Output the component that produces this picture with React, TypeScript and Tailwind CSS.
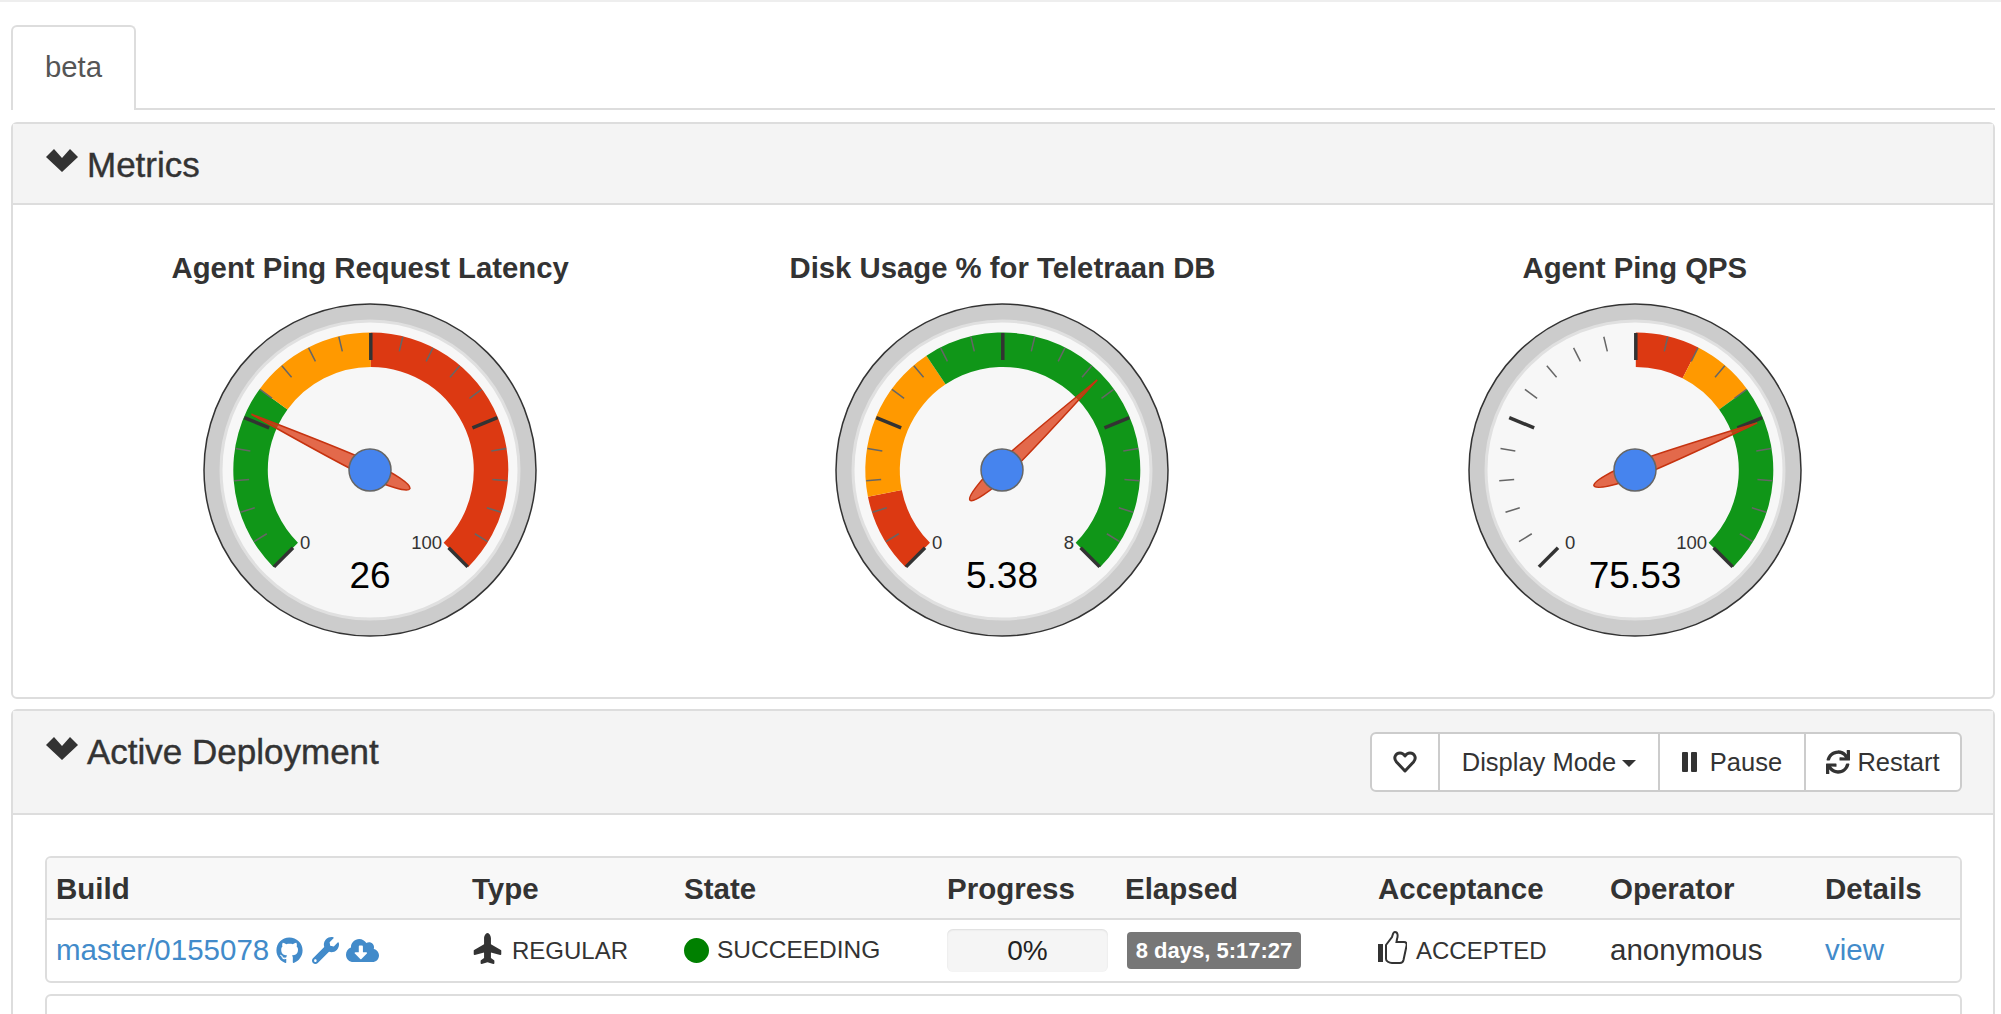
import { FaSync, FaGithub, FaWrench, FaCloudDownloadAlt, FaPlane } from 'react-icons/fa';

const GREEN = '#109618';
const ORANGE = '#ff9900';
const RED = '#dc3912';

interface Band {
  from: number;
  to: number;
  color: string;
}

interface GaugeProps {
  title: string;
  max: number;
  value: number;
  label: string;
  bands: Band[];
}

const toAngle = (v: number, max: number) => -135 + (v / max) * 270;

const polar = (r: number, deg: number) => {
  const a = (deg * Math.PI) / 180;
  return [r * Math.sin(a), -r * Math.cos(a)];
};

function bandPath(r1: number, r2: number, a1: number, a2: number) {
  const [x1, y1] = polar(r2, a1);
  const [x2, y2] = polar(r2, a2);
  const [x3, y3] = polar(r1, a2);
  const [x4, y4] = polar(r1, a1);
  const large = a2 - a1 > 180 ? 1 : 0;
  return `M${x1} ${y1}A${r2} ${r2} 0 ${large} 1 ${x2} ${y2}L${x3} ${y3}A${r1} ${r1} 0 ${large} 0 ${x4} ${y4}Z`;
}

function Gauge({ title, max, value, label, bands }: GaugeProps) {
  const ticks = Array.from({ length: 21 }, (_, i) => i);
  const needle = toAngle(value, max);

  return (
    <div className="flex flex-col items-center">
      <div className="text-[29.3px] font-bold leading-[34px] text-[#333]">{title}</div>
      <svg viewBox="-170 -170 340 340" className="mt-[15px] h-[340px] w-[340px]">
        <circle r="166" fill="#ccc" stroke="#333" strokeWidth="1.5" />
        <circle r="149" fill="#f7f7f7" stroke="#e0e0e0" strokeWidth="3" />
        <g transform="translate(0.8 0)">
          {bands.map((b) => (
            <path key={b.from} d={bandPath(103, 137.5, toAngle(b.from, max), toAngle(b.to, max))} fill={b.color} />
          ))}
          {ticks.map((i) => {
            const deg = -135 + i * 13.5;
            const major = i % 5 === 0;
            const [x1, y1] = polar(137, deg);
            const [x2, y2] = polar(major ? 110 : 122, deg);
            return (
              <line
                key={i}
                x1={x1}
                y1={y1}
                x2={x2}
                y2={y2}
                stroke={major ? '#333' : '#666'}
                strokeWidth={major ? 3.5 : 1.5}
              />
            );
          })}
        </g>
        <text x="-70" y="79" fontSize="18.5" fill="#333">0</text>
        <text x="72" y="79" fontSize="18.5" fill="#333" textAnchor="end">{max}</text>
        <text x="0" y="118" fontSize="37" fill="#000" textAnchor="middle">{label}</text>
        <path
          transform={`rotate(${needle})`}
          d="M0 -131C3 -90 7.5 -30 7.5 0C7.5 22 4.5 44 0 44C-4.5 44 -7.5 22 -7.5 0C-7.5 -30 -3 -90 0 -131Z"
          fill={RED}
          fillOpacity="0.75"
          stroke="#c63310"
          strokeWidth="1.5"
        />
        <circle r="21" fill="#4684ee" stroke="#666" strokeWidth="1.5" />
      </svg>
    </div>
  );
}

function PanelTitle({ children }: { children: string }) {
  return (
    <div className="flex items-center gap-[9px] text-[35px] leading-[40px] text-[#333] [-webkit-text-stroke:0.4px_#333]">
      <svg viewBox="0 0 32 23" className="mt-[-8px] h-[23px] w-[32px]" fill="#333">
        <path d="M0 8L8 0L16 9L24 0L32 8L16 23Z" />
      </svg>
      <span>{children}</span>
    </div>
  );
}

const headers = ['Build', 'Type', 'State', 'Progress', 'Elapsed', 'Acceptance', 'Operator', 'Details'];

export default function App() {
  return (
    <div className="h-[1014px] overflow-hidden bg-white font-['Liberation_Sans',Arial,sans-serif] text-[#333]">
      <div className="h-[2px] bg-[#eee]" />

      {/* Tabs */}
      <div className="ml-[11px] mr-[6px] mt-[23px] flex h-[85px] border-b-2 border-[#ddd]">
        <div className="mb-[-2px] flex w-[125px] items-center justify-center rounded-t-[6px] border-2 border-b-0 border-[#ddd] bg-white pb-[4px] text-[29.3px] text-[#555]">
          beta
        </div>
      </div>

      {/* Metrics */}
      <div className="ml-[11px] mr-[6px] mt-[12px] rounded-[6px] border-2 border-[#ddd]">
        <div className="flex h-[81px] items-center border-b-2 border-[#ddd] bg-[#f4f4f4] pl-[33px] pt-[2px]">
          <PanelTitle>Metrics</PanelTitle>
        </div>
        <div className="grid grid-cols-3 pb-[57px] pl-[41px] pr-[42px] pt-[46px]">
          <Gauge
            title="Agent Ping Request Latency"
            max={100}
            value={26}
            label="26"
            bands={[
              { from: 0, to: 30, color: GREEN },
              { from: 30, to: 50, color: ORANGE },
              { from: 50, to: 100, color: RED },
            ]}
          />
          <Gauge
            title="Disk Usage % for Teletraan DB"
            max={8}
            value={5.38}
            label="5.38"
            bands={[
              { from: 0, to: 1, color: RED },
              { from: 1, to: 3, color: ORANGE },
              { from: 3, to: 8, color: GREEN },
            ]}
          />
          <Gauge
            title="Agent Ping QPS"
            max={100}
            value={75.53}
            label="75.53"
            bands={[
              { from: 50, to: 60, color: RED },
              { from: 60, to: 70, color: ORANGE },
              { from: 70, to: 100, color: GREEN },
            ]}
          />
        </div>
      </div>

      {/* Active Deployment */}
      <div className="ml-[11px] mr-[6px] mt-[10px] rounded-[6px] border-2 border-[#ddd]">
        <div className="flex h-[104px] items-start justify-between border-b-2 border-[#ddd] bg-[#f4f4f4] pl-[33px] pr-[31px]">
          <div className="pt-[21px]">
            <PanelTitle>Active Deployment</PanelTitle>
          </div>
          <div className="mt-[21px] flex h-[60px] rounded-[6px] border-2 border-[#ccc] bg-white text-[25.5px] text-[#333]">
            <div className="flex w-[68px] items-center justify-center border-r-2 border-[#ccc]">
              <svg viewBox="0 0 24 24" className="h-[24px] w-[24px]" fill="none" stroke="#333" strokeWidth="3" strokeLinejoin="round">
                <path d="M12 21L3.5 12C0 8 2.5 3 7 3C9.5 3 11 4.5 12 6C13 4.5 14.5 3 17 3C21.5 3 24 8 20.5 12Z" />
              </svg>
            </div>
            <div className="flex w-[220px] items-center justify-center gap-[6px] border-r-2 border-[#ccc]">
              Display Mode
              <span className="mt-[3px] border-x-[7px] border-t-[7px] border-x-transparent border-t-[#333]" />
            </div>
            <div className="flex w-[146px] items-center justify-center gap-[13px] border-r-2 border-[#ccc]">
              <svg viewBox="0 0 15 20" className="h-[20px] w-[15px]" fill="#333">
                <rect x="0" y="0" width="6" height="20" rx="1" />
                <rect x="9" y="0" width="6" height="20" rx="1" />
              </svg>
              Pause
            </div>
            <div className="flex w-[154px] items-center justify-center gap-[7px]">
              <FaSync size={24} />
              Restart
            </div>
          </div>
        </div>

        <div className="pl-[32px] pr-[31px] pt-[41px]">
          <div className="overflow-hidden rounded-[6px] border-2 border-[#ddd]">
            <table className="w-full table-fixed border-collapse">
              <colgroup>
                <col className="w-[415px]" />
                <col className="w-[212px]" />
                <col className="w-[263px]" />
                <col className="w-[178px]" />
                <col className="w-[253px]" />
                <col className="w-[232px]" />
                <col className="w-[215px]" />
                <col />
              </colgroup>
              <thead>
                <tr className="h-[61px] border-b-2 border-[#ddd] bg-[#f8f8f8]">
                  {headers.map((h, i) => (
                    <th key={h} className={`${i === 0 ? 'pl-[9px]' : 'pl-[10px]'} pt-[2px] text-left text-[29.5px] font-bold`}>
                      {h}
                    </th>
                  ))}
                </tr>
              </thead>
              <tbody>
                <tr className="h-[62px]">
                  <td className="pl-[9px]">
                    <div className="flex items-center gap-[7px] text-[29.5px] text-[#428bca]">
                      master/0155078
                      <FaGithub size={27} />
                      <FaWrench size={27} className="ml-[2px]" />
                      <FaCloudDownloadAlt size={33} />
                    </div>
                  </td>
                  <td className="pl-[10px]">
                    <div className="flex items-center gap-[9px] text-[24px]">
                      <FaPlane size={31} className="-mt-[4px] -rotate-90" />
                      REGULAR
                    </div>
                  </td>
                  <td className="pl-[10px]">
                    <div className="flex items-center gap-[8px] text-[24.5px]">
                      <span className="h-[25px] w-[25px] rounded-full bg-[#008000]" />
                      SUCCEEDING
                    </div>
                  </td>
                  <td className="pl-[10px]">
                    <div className="flex h-[43px] w-[161px] items-center justify-center rounded-[6px] bg-[#f5f5f5] text-[28px] text-[#222] shadow-[inset_0_1px_2px_rgba(0,0,0,0.1)]">
                      0%
                    </div>
                  </td>
                  <td className="pl-[12px]">
                    <span className="inline-flex h-[37px] w-[174px] items-center justify-center rounded-[4px] bg-[#777] text-[22px] font-bold text-white">
                      8 days, 5:17:27
                    </span>
                  </td>
                  <td className="pl-[10px]">
                    <div className="flex items-center gap-[9px] text-[24px]">
                      <svg viewBox="0 0 29 33" className="-mt-[6px] h-[33px] w-[29px]" fill="none" stroke="#333" strokeWidth="2">
                        <rect x="0" y="13" width="5" height="18" fill="#333" stroke="none" />
                        <path d="M8 14L14 6C15 3 15 1 17 1C20 1 20 5 19 8L18.5 11H26C28.5 11 29 13 28.5 15L25.5 29C25 31 24 32 22 32H14C11 32 8 30 8 28Z" />
                      </svg>
                      ACCEPTED
                    </div>
                  </td>
                  <td className="pl-[10px] text-[29.5px]">anonymous</td>
                  <td className="pl-[10px] text-[29.5px] text-[#428bca]">view</td>
                </tr>
              </tbody>
            </table>
          </div>
          <div className="mt-[11px] h-[60px] rounded-[6px] border-2 border-[#ddd]" />
        </div>
      </div>
    </div>
  );
}
